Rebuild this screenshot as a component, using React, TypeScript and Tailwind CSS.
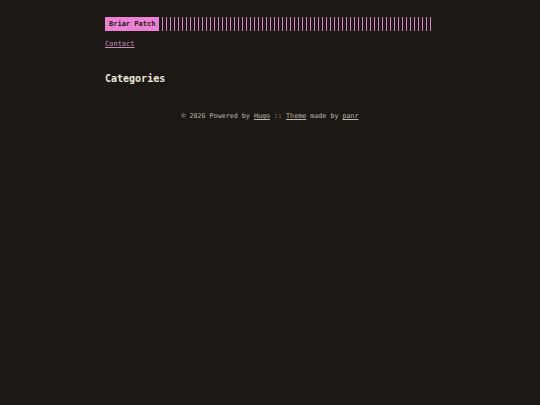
import React from 'react';

const mono = { fontFamily: '"DejaVu Sans Mono", "Liberation Mono", monospace' };

export default function App() {
  return (
    <div className="min-h-[405px] w-full bg-[#1c1914] text-[7px] leading-[10px] text-[#d6d0c4]" style={mono}>
      <div className="mx-auto w-[330px] pt-[17px]">
        <header>
          <div className="flex items-stretch gap-[3px] pr-[1px]">
            <a className="bg-[#ec82d6] px-[4px] text-[7px] font-bold leading-[14px] text-[#1c1914]">
              Briar Patch
            </a>
            <div className="h-[14px] flex-1 bg-[repeating-linear-gradient(90deg,#d985c8_0px,#d985c8_1px,transparent_1px,transparent_4px)]" />
          </div>
          <nav className="mt-[8px] leading-[10px]">
            <a className="text-[7px] text-[#c88ac0] underline">Contact</a>
          </nav>
        </header>
        <main className="mt-[23px]">
          <h1 className="text-[10px] font-bold leading-[14px] text-[#ece6da]">Categories</h1>
        </main>
        <footer className="mt-[25px] text-center text-[6.7px] leading-[10px] text-[#bdb7ab]">
          © 2026 Powered by <a className="underline">Hugo</a> :: <a className="underline">Theme</a> made by{' '}
          <a className="underline">panr</a>
        </footer>
      </div>
    </div>
  );
}
